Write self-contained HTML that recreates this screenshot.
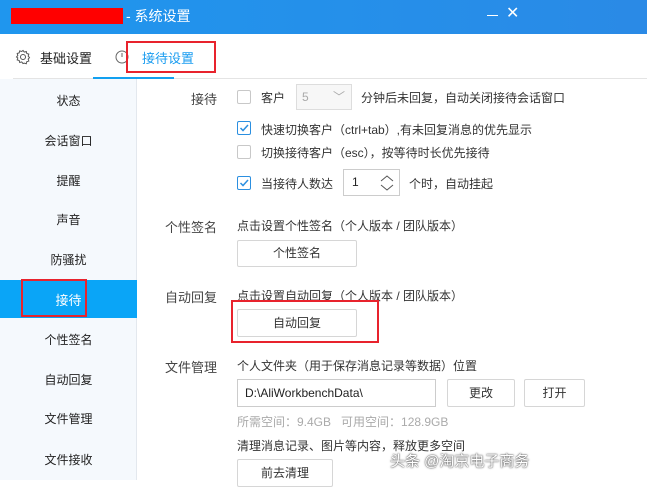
<!DOCTYPE html>
<html><head><meta charset="utf-8"><style>
*{margin:0;padding:0;box-sizing:border-box}
body{width:647px;height:480px;overflow:hidden;background:#fff;font-family:"Liberation Sans","Noto Sans CJK SC",sans-serif;font-size:12px;color:#333;position:relative}
.a{position:absolute;white-space:nowrap}
.title{left:0;top:0;width:647px;height:34px;background:linear-gradient(90deg,#1f96ee,#2a8ae6)}
.side{left:0;top:79px;width:137px;height:401px;background:#f5f9fd;border-right:1px solid #e3e8ee}
.si{width:137px;text-align:center;font-size:12px;color:#222}
.cb{width:14px;height:14px;border:1px solid #c8c8c8;background:#fff;border-radius:2px}
.cb.on{border-color:#2b8fe0}
.btn{border:1px solid #d6d6d6;background:#fff;text-align:center;border-radius:2px}
.lbl{font-size:13px;color:#444;text-align:right;width:80px}
.red{border:2px solid #e8232d}
</style></head><body>
<div class="a title"></div>
<div class="a" style="left:11px;top:8px;width:112px;height:16px;background:#f00"></div>
<div class="a" style="left:126px;top:6px;color:#fff;font-size:14px">- 系统设置</div>
<div class="a" style="left:487px;top:15px;width:11px;height:1px;background:#fff"></div>
<div class="a" style="left:506px;top:3px;color:#fff;font-size:16px">✕</div>
<div class="a" style="left:13px;top:78px;width:634px;height:1px;background:#e4e4e4"></div>
<div class="a" style="left:93px;top:77px;width:81px;height:2px;background:#12a0f0"></div>
<svg class="a" style="left:15px;top:49px" width="16" height="16" viewBox="0 0 16 16"><circle cx="8" cy="8" r="2.5" fill="none" stroke="#555"/><path d="M8 1.5l1.3 1.6 2-.6.5 2 2 .6-.6 2 1.3 1.5-1.3 1.5.6 2-2 .6-.5 2-2-.6L8 14.5l-1.3-1.6-2 .6-.5-2-2-.6.6-2L1.5 8l1.3-1.5-.6-2 2-.6.5-2 2 .6z" fill="none" stroke="#555"/></svg>
<div class="a" style="left:40px;top:48px;font-size:13px;color:#222">基础设置</div>
<svg class="a" style="left:114px;top:49px" width="16" height="16" viewBox="0 0 16 16"><circle cx="8" cy="8" r="6" fill="none" stroke="#666"/><path d="M8 4v4" stroke="#666"/></svg>
<div class="a" style="left:142px;top:48px;font-size:13px;color:#1a9cf0">接待设置</div>
<div class="a red" style="left:126px;top:41px;width:90px;height:32px"></div>

<div class="a side"></div>
<div class="a" style="left:0;top:280px;width:137px;height:38px;background:#0aa5f7"></div>
<div class="a si" style="top:92px">状态</div>
<div class="a si" style="top:132px">会话窗口</div>
<div class="a si" style="top:172px">提醒</div>
<div class="a si" style="top:211px">声音</div>
<div class="a si" style="top:251px">防骚扰</div>
<div class="a si" style="top:290px;color:#fff;font-size:13px">接待</div>
<div class="a red" style="left:21px;top:279px;width:66px;height:38px"></div>
<div class="a si" style="top:331px">个性签名</div>
<div class="a si" style="top:371px">自动回复</div>
<div class="a si" style="top:410px">文件管理</div>
<div class="a si" style="top:451px">文件接收</div>

<div class="a lbl" style="left:137px;top:89px">接待</div>
<div class="a cb" style="left:237px;top:90px"></div>
<div class="a" style="left:261px;top:89px">客户</div>
<div class="a" style="left:296px;top:84px;width:56px;height:26px;border:1px solid #ddd;background:#f7f7f7;color:#aaa;padding:5px 0 0 5px">5<span style="position:absolute;left:36px;top:3px;color:#aaa">﹀</span></div>
<div class="a" style="left:361px;top:89px">分钟后未回复，自动关闭接待会话窗口</div>
<div class="a cb on" style="left:237px;top:121px"><svg width="12" height="12" style="position:absolute;left:0;top:0"><path d="M2.5 6l2.5 2.5 5-5.5" fill="none" stroke="#2b8fe0" stroke-width="1.5"/></svg></div>
<div class="a" style="left:261px;top:121px">快速切换客户（ctrl+tab）,有未回复消息的优先显示</div>
<div class="a cb" style="left:237px;top:145px"></div>
<div class="a" style="left:261px;top:144px">切换接待客户（esc），按等待时长优先接待</div>
<div class="a cb on" style="left:237px;top:176px"><svg width="12" height="12" style="position:absolute;left:0;top:0"><path d="M2.5 6l2.5 2.5 5-5.5" fill="none" stroke="#2b8fe0" stroke-width="1.5"/></svg></div>
<div class="a" style="left:261px;top:175px">当接待人数达</div>
<div class="a" style="left:343px;top:169px;width:57px;height:27px;border:1px solid #ccc;padding:5px 0 0 8px;color:#222">1<svg style="position:absolute;left:36px;top:4px" width="14" height="18"><path d="M1 7l6-5 6 5M1 11l6 5 6-5" fill="none" stroke="#555"/></svg></div>
<div class="a" style="left:409px;top:175px">个时，自动挂起</div>

<div class="a lbl" style="left:137px;top:217px">个性签名</div>
<div class="a" style="left:237px;top:217px">点击设置个性签名（个人版本 / 团队版本）</div>
<div class="a btn" style="left:237px;top:240px;width:120px;height:27px;line-height:25px">个性签名</div>

<div class="a lbl" style="left:137px;top:287px">自动回复</div>
<div class="a" style="left:237px;top:287px">点击设置自动回复（个人版本 / 团队版本）</div>
<div class="a btn" style="left:237px;top:309px;width:120px;height:28px;line-height:26px">自动回复</div>
<div class="a red" style="left:231px;top:300px;width:148px;height:43px"></div>

<div class="a lbl" style="left:137px;top:357px">文件管理</div>
<div class="a" style="left:237px;top:357px">个人文件夹（用于保存消息记录等数据）位置</div>
<div class="a" style="left:237px;top:379px;width:199px;height:28px;border:1px solid #ccc;padding:6px 0 0 7px;color:#222">D:\AliWorkbenchData\</div>
<div class="a btn" style="left:447px;top:379px;width:68px;height:28px;line-height:26px">更改</div>
<div class="a btn" style="left:524px;top:379px;width:61px;height:28px;line-height:26px">打开</div>
<div class="a" style="left:237px;top:413px;color:#aaa">所需空间：9.4GB &nbsp; 可用空间：128.9GB</div>
<div class="a" style="left:237px;top:437px">清理消息记录、图片等内容，释放更多空间</div>
<div class="a btn" style="left:237px;top:459px;width:96px;height:28px;line-height:26px">前去清理</div>
<div class="a" style="left:390px;top:450px;font-size:15px;color:#fff;text-shadow:0 0 2px #555,0 0 1px #333">头条 @淘京电子商务</div>
</body></html>
